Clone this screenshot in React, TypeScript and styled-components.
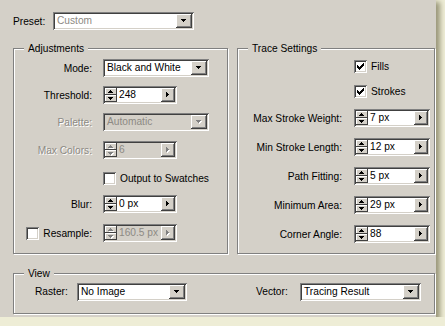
import React from "react"
import styled, { createGlobalStyle } from "styled-components"

const sunken = "inset 1px 1px 0 #808080, inset -1px -1px 0 #ffffff, inset 2px 2px 0 #404040, inset -2px -2px 0 #d4d0c8"
const raised = "inset -1px -1px 0 #404040, inset 1px 1px 0 #ffffff, inset -2px -2px 0 #808080"

const GlobalStyle = createGlobalStyle`
  html, body {
    margin: 0;
    padding: 0;
    background: #eeedd6;
  }
  body {
    font-family: "Liberation Sans", Arial, sans-serif;
    font-size: 10.2px;
    color: #000;
  }
`

const Window = styled.div`
  width: 436px;
  height: 317px;
  box-sizing: border-box;
  padding: 12px 0 0 13px;
  background: #d4d0c8;
  box-shadow: 3px 3px 5px 1px rgba(70, 66, 30, 0.5);
  display: flex;
  flex-direction: column;
`

const PresetRow = styled.div`
  display: flex;
  align-items: center;
  height: 18px;
`

const PresetLabel = styled.span`
  width: 40px;
`

const GroupsRow = styled.div`
  display: flex;
  gap: 9px;
  margin-top: 18px;
`

const Group = styled.div<{ $w: number; $h: number; $mt?: number }>`
  width: ${({ $w }) => $w}px;
  height: ${({ $h }) => $h}px;
  margin-top: ${({ $mt }) => $mt ?? 0}px;
  box-sizing: border-box;
  border: 1px solid #808080;
  box-shadow: inset 1px 1px 0 #ffffff, 1px 1px 0 #ffffff;
  display: flex;
  flex-direction: column;
`

const GroupTitle = styled.span`
  display: block;
  width: fit-content;
  margin: -7px 0 0 10px;
  padding: 0 4px;
  line-height: 13px;
  background: #d4d0c8;
`

const Row = styled.div<{ $labelWidth: number; $gap: number; $mt: number }>`
  display: grid;
  grid-template-columns: ${({ $labelWidth }) => $labelWidth}px auto;
  column-gap: ${({ $gap }) => $gap}px;
  align-items: center;
  height: 18px;
  margin-top: ${({ $mt }) => $mt}px;
`

const RowLabel = styled.span<{ $disabled?: boolean }>`
  display: flex;
  justify-content: flex-end;
  align-items: center;
  gap: 4px;
  white-space: nowrap;
  color: ${({ $disabled }) => ($disabled ? "#8d8a84" : "#000")};
  text-shadow: ${({ $disabled }) => ($disabled ? "1px 1px 0 #ffffff" : "none")};
`

const CheckLine = styled.label`
  display: flex;
  align-items: center;
  gap: 4px;
  white-space: nowrap;
`

const CheckBox = styled.span`
  width: 13px;
  height: 13px;
  box-sizing: border-box;
  background: #fff;
  box-shadow: ${sunken};
  display: grid;
  place-items: center;
  flex: none;
`

const Field = styled.div<{ $w: number; $disabled?: boolean }>`
  width: ${({ $w }) => $w}px;
  height: 18px;
  box-sizing: border-box;
  padding: 2px;
  display: flex;
  background: ${({ $disabled }) => ($disabled ? "#d4d0c8" : "#fff")};
  box-shadow: ${sunken};
`

const FieldText = styled.span<{ $muted?: boolean }>`
  flex: 1;
  padding-left: 2px;
  line-height: 14px;
  white-space: nowrap;
  overflow: hidden;
  color: ${({ $muted }) => ($muted ? "#8d8a84" : "#000")};
`

const Button = styled.span<{ $w: number }>`
  width: ${({ $w }) => $w}px;
  flex: none;
  background: #d4d0c8;
  box-shadow: ${raised};
  display: grid;
  place-items: center;
`

const Stepper = styled.span`
  width: 12px;
  flex: none;
  display: flex;
  flex-direction: column;
`

const StepButton = styled.span`
  flex: 1;
  background: #d4d0c8;
  box-shadow: inset -1px -1px 0 #404040, inset 1px 1px 0 #ffffff;
  display: grid;
  place-items: center;
`

const ViewRow = styled.div`
  display: flex;
  align-items: center;
  height: 19px;
  margin: 2px 0 0 21px;
`

const ViewLabel = styled.span<{ $w: number; $ml?: number }>`
  width: ${({ $w }) => $w}px;
  margin-left: ${({ $ml }) => $ml ?? 0}px;
`

type Dir = "up" | "down" | "right"

const arrowPaths: Record<Dir, { w: number; h: number; d: string }> = {
  down: { w: 5, h: 3, d: "M0 0h5v1H0z M1 1h3v1H1z M2 2h1v1H2z" },
  up: { w: 5, h: 3, d: "M2 0h1v1H2z M1 1h3v1H1z M0 2h5v1H0z" },
  right: { w: 3, h: 5, d: "M0 0h1v5H0z M1 1h1v3H1z M2 2h1v1H2z" },
}

const Arrow = ({ dir, disabled }: { dir: Dir; disabled?: boolean }) => {
  const a = arrowPaths[dir]
  return (
    <svg width={a.w + 1} height={a.h + 1} viewBox={`0 0 ${a.w + 1} ${a.h + 1}`} shapeRendering="crispEdges">
      {disabled && <path d={a.d} fill="#fff" transform="translate(1 1)" />}
      <path d={a.d} fill={disabled ? "#808080" : "#000"} />
    </svg>
  )
}

const Check = () => (
  <svg width="7" height="7" viewBox="0 0 7 7" shapeRendering="crispEdges">
    <path d="M0 2h1v3H0z M1 3h1v3H1z M2 4h1v3H2z M3 3h1v3H3z M4 2h1v3H4z M5 1h1v3H5z M6 0h1v3H6z" fill="#000" />
  </svg>
)

const Dropdown = ({ w, value, disabled, muted }: { w: number; value: string; disabled?: boolean; muted?: boolean }) => (
  <Field $w={w} $disabled={disabled}>
    <FieldText $muted={disabled || muted}>{value}</FieldText>
    <Button $w={16}>
      <Arrow dir="down" disabled={disabled} />
    </Button>
  </Field>
)

const Spinner = ({ w, value, disabled }: { w: number; value: string; disabled?: boolean }) => (
  <Field $w={w} $disabled={disabled}>
    <Stepper>
      <StepButton>
        <Arrow dir="up" disabled={disabled} />
      </StepButton>
      <StepButton>
        <Arrow dir="down" disabled={disabled} />
      </StepButton>
    </Stepper>
    <FieldText $muted={disabled}>{value}</FieldText>
    <Button $w={14}>
      <Arrow dir="right" disabled={disabled} />
    </Button>
  </Field>
)

const CheckItem = ({ label, checked }: { label: string; checked?: boolean }) => (
  <CheckLine>
    <CheckBox>{checked && <Check />}</CheckBox>
    {label}
  </CheckLine>
)

const traceFields = [
  { label: "Max Stroke Weight:", value: "7 px", mt: 9 },
  { label: "Min Stroke Length:", value: "12 px", mt: 11 },
  { label: "Path Fitting:", value: "5 px", mt: 11 },
  { label: "Minimum Area:", value: "29 px", mt: 11 },
  { label: "Corner Angle:", value: "88", mt: 11 },
]

export default function App() {
  return (
    <>
      <GlobalStyle />
      <Window>
        <PresetRow>
          <PresetLabel>Preset:</PresetLabel>
          <Dropdown w={141} value="Custom" muted />
        </PresetRow>

        <GroupsRow>
          <Group $w={215} $h={206}>
            <GroupTitle>Adjustments</GroupTitle>
            <Row $labelWidth={78} $gap={11} $mt={4}>
              <RowLabel>Mode:</RowLabel>
              <Dropdown w={106} value="Black and White" />
            </Row>
            <Row $labelWidth={78} $gap={11} $mt={9}>
              <RowLabel>Threshold:</RowLabel>
              <Spinner w={74} value="248" />
            </Row>
            <Row $labelWidth={78} $gap={11} $mt={9}>
              <RowLabel $disabled>Palette:</RowLabel>
              <Dropdown w={106} value="Automatic" disabled />
            </Row>
            <Row $labelWidth={78} $gap={11} $mt={10}>
              <RowLabel $disabled>Max Colors:</RowLabel>
              <Spinner w={74} value="6" disabled />
            </Row>
            <Row $labelWidth={78} $gap={11} $mt={10}>
              <span />
              <CheckItem label="Output to Swatches" />
            </Row>
            <Row $labelWidth={78} $gap={11} $mt={8}>
              <RowLabel>Blur:</RowLabel>
              <Spinner w={74} value="0 px" />
            </Row>
            <Row $labelWidth={78} $gap={11} $mt={11}>
              <RowLabel>
                <CheckBox />
                Resample:
              </RowLabel>
              <Spinner w={74} value="160.5 px" disabled />
            </Row>
          </Group>

          <Group $w={198} $h={206}>
            <GroupTitle>Trace Settings</GroupTitle>
            <Row $labelWidth={104} $gap={12} $mt={2}>
              <span />
              <CheckItem label="Fills" checked />
            </Row>
            <Row $labelWidth={104} $gap={12} $mt={7}>
              <span />
              <CheckItem label="Strokes" checked />
            </Row>
            {traceFields.map((f) => (
              <Row key={f.label} $labelWidth={104} $gap={12} $mt={f.mt}>
                <RowLabel>{f.label}</RowLabel>
                <Spinner w={76} value={f.value} />
              </Row>
            ))}
          </Group>
        </GroupsRow>

        <Group $w={422} $h={41} $mt={19}>
          <GroupTitle>View</GroupTitle>
          <ViewRow>
            <ViewLabel $w={42}>Raster:</ViewLabel>
            <Dropdown w={110} value="No Image" />
            <ViewLabel $w={44} $ml={69}>Vector:</ViewLabel>
            <Dropdown w={121} value="Tracing Result" />
          </ViewRow>
        </Group>
      </Window>
    </>
  )
}
